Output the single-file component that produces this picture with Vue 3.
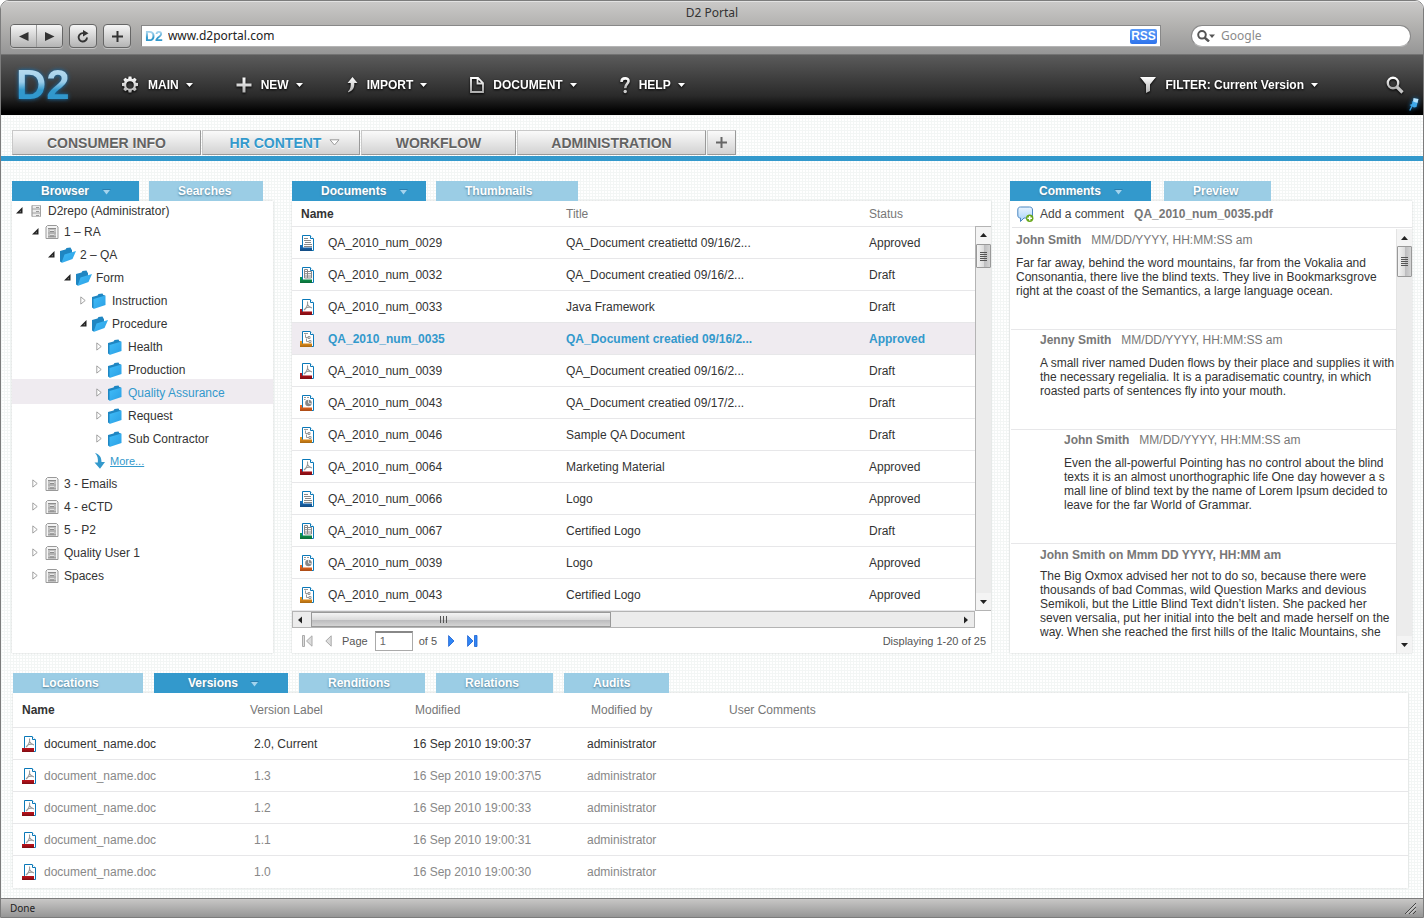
<script setup>
import { ref } from 'vue'

const url = ref('www.d2portal.com')
const query = ref('')
const page = ref('1')

const menus = [
  { icon: 'gear', label: 'MAIN', size: [18, 18] },
  { icon: 'plus', label: 'NEW', size: [16, 16] },
  { icon: 'import', label: 'IMPORT', size: [12, 18] },
  { icon: 'page', label: 'DOCUMENT', size: [14, 16] },
  { icon: 'help', label: 'HELP', size: [10, 17] },
]

const sections = [
  { label: 'CONSUMER INFO', width: 189 },
  { label: 'HR CONTENT', width: 158, active: true },
  { label: 'WORKFLOW', width: 155 },
  { label: 'ADMINISTRATION', width: 189 },
]

const browserTabs = [
  { label: 'Browser', width: 127, active: true },
  { label: 'Searches', width: 114 },
]
const documentTabs = [
  { label: 'Documents', width: 134, active: true },
  { label: 'Thumbnails', width: 142 },
]
const commentTabs = [
  { label: 'Comments', width: 141, active: true },
  { label: 'Preview', width: 107 },
]
const detailTabs = [
  { label: 'Locations', width: 130 },
  { label: 'Versions', width: 134, active: true },
  { label: 'Renditions', width: 126 },
  { label: 'Relations', width: 117 },
  { label: 'Audits', width: 105 },
]

const tree = [
  { depth: 0, open: true, icon: 'server', label: 'D2repo (Administrator)' },
  { depth: 1, open: true, icon: 'cabinet', label: '1 – RA' },
  { depth: 2, open: true, icon: 'folder-open', label: '2 – QA' },
  { depth: 3, open: true, icon: 'folder-open', label: 'Form' },
  { depth: 4, icon: 'folder', label: 'Instruction' },
  { depth: 4, open: true, icon: 'folder-open', label: 'Procedure' },
  { depth: 5, icon: 'folder', label: 'Health' },
  { depth: 5, icon: 'folder', label: 'Production' },
  { depth: 5, icon: 'folder', label: 'Quality Assurance', selected: true },
  { depth: 5, icon: 'folder', label: 'Request' },
  { depth: 5, icon: 'folder', label: 'Sub Contractor' },
  { depth: 4, more: true, icon: 'more', label: 'More...' },
  { depth: 1, icon: 'cabinet', label: '3 - Emails' },
  { depth: 1, icon: 'cabinet', label: '4 - eCTD' },
  { depth: 1, icon: 'cabinet', label: '5 - P2' },
  { depth: 1, icon: 'cabinet', label: 'Quality User 1' },
  { depth: 1, icon: 'cabinet', label: 'Spaces' },
]

const documents = [
  { type: 'word', name: 'QA_2010_num_0029', title: 'QA_Document creatiettd 09/16/2...', status: 'Approved' },
  { type: 'excel', name: 'QA_2010_num_0032', title: 'QA_Document creatied 09/16/2...', status: 'Draft' },
  { type: 'pdf', name: 'QA_2010_num_0033', title: 'Java Framework', status: 'Draft' },
  { type: 'flow', name: 'QA_2010_num_0035', title: 'QA_Document creatied 09/16/2...', status: 'Approved', selected: true },
  { type: 'pdf', name: 'QA_2010_num_0039', title: 'QA_Document creatied 09/16/2...', status: 'Draft' },
  { type: 'slides', name: 'QA_2010_num_0043', title: 'QA_Document creatied 09/17/2...', status: 'Draft' },
  { type: 'flow', name: 'QA_2010_num_0046', title: 'Sample QA Document', status: 'Draft' },
  { type: 'pdf', name: 'QA_2010_num_0064', title: 'Marketing Material', status: 'Approved' },
  { type: 'word', name: 'QA_2010_num_0066', title: 'Logo', status: 'Approved' },
  { type: 'excel', name: 'QA_2010_num_0067', title: 'Certified Logo', status: 'Draft' },
  { type: 'slides', name: 'QA_2010_num_0039', title: 'Logo', status: 'Approved' },
  { type: 'flow', name: 'QA_2010_num_0043', title: 'Certified Logo', status: 'Approved' },
]

const comments = [
  {
    level: 0, author: 'John Smith', date: 'MM/DD/YYYY, HH:MM:SS am',
    text: 'Far far away, behind the word mountains, far from the Vokalia and\nConsonantia, there live the blind texts. They live in Bookmarksgrove\nright at the coast of the Semantics, a large language ocean.',
  },
  {
    level: 1, author: 'Jenny Smith', date: 'MM/DD/YYYY, HH:MM:SS am',
    text: 'A small river named Duden flows by their place and supplies it with\nthe necessary regelialia. It is a paradisematic country, in which\nroasted parts of sentences fly into your mouth.',
  },
  {
    level: 2, author: 'John Smith', date: 'MM/DD/YYYY, HH:MM:SS am',
    text: 'Even the all-powerful Pointing has no control about the blind\ntexts it is an almost unorthographic life One day however a s\nmall line of blind text by the name of Lorem Ipsum decided to\nleave for the far World of Grammar.',
  },
  {
    level: 1, last: true, author: 'John Smith on Mmm DD YYYY, HH:MM am', date: '',
    text: 'The Big Oxmox advised her not to do so, because there were\nthousands of bad Commas, wild Question Marks and devious\nSemikoli, but the Little Blind Text didn’t listen. She packed her\nseven versalia, put her initial into the belt and made herself on the\nway. When she reached the first hills of the Italic Mountains, she',
  },
]

const versions = [
  { version: '2.0, Current', modified: '16 Sep 2010 19:00:37', current: true },
  { version: '1.3', modified: '16 Sep 2010 19:00:37\\5' },
  { version: '1.2', modified: '16 Sep 2010 19:00:33' },
  { version: '1.1', modified: '16 Sep 2010 19:00:31' },
  { version: '1.0', modified: '16 Sep 2010 19:00:30' },
]

const trayColors = { word: '#1b6bb8', excel: '#0f9a50', pdf: '#b5121b', flow: '#f0951c', slides: '#f06a20' }
</script>

<template>
  <div class="window">
    <svg class="defs" width="0" height="0" aria-hidden="true">
      <defs>
        <linearGradient id="silver" x1="0" y1="0" x2="0" y2="1">
          <stop offset="0" stop-color="#ffffff" /><stop offset="1" stop-color="#b0b0b0" />
        </linearGradient>
        <linearGradient id="folderFront" x1="0" y1="0" x2="1" y2="1">
          <stop offset="0" stop-color="#3fbcf8" /><stop offset="1" stop-color="#2b9fe4" />
        </linearGradient>
        <linearGradient id="trayShade" x1="0" y1="0" x2="0" y2="1">
          <stop offset="0.2" stop-color="#000" stop-opacity="0" /><stop offset="1" stop-color="#000" stop-opacity="0.3" />
        </linearGradient>
        <linearGradient id="bubble" x1="0" y1="0" x2="0" y2="1">
          <stop offset="0" stop-color="#e8f4ff" /><stop offset="1" stop-color="#a8d2fa" />
        </linearGradient>
      </defs>
      <symbol id="gear" viewBox="0 0 18 18">
        <path fill="url(#silver)" fill-rule="evenodd" d="M7.6 0.5h2.8l.4 2.2 1 .4 1.9-1.3 2 2-1.3 1.9.4 1 2.2.4v2.8l-2.2.4-.4 1 1.3 1.9-2 2-1.9-1.3-1 .4-.4 2.2H7.600l-.4-2.200-1-.4-1.900 1.300-2-2 1.300-1.900-.4-1-2.200-.4V7.100l2.200-.4.4-1-1.300-1.900 2-2 1.900 1.300 1-.4zM9 5.200a3.800 3.800 0 1 0 0 7.600 3.800 3.800 0 0 0 0-7.600z" />
      </symbol>
      <symbol id="plus" viewBox="0 0 16 16"><path fill="url(#silver)" d="M6.500 0.500h3v6h6v3h-6v6h-3v-6h-6v-3h6z" /></symbol>
      <symbol id="import" viewBox="0 0 12 18">
        <path fill="url(#silver)" d="M6.500 1l5 6H8.300c.3 4.500-1.300 7.500-5.800 9.300-.7-.2-.7-.7-.2-1.100C4.500 13 5 10.500 4.700 7H1.500z" />
      </symbol>
      <symbol id="page" viewBox="0 0 14 16">
        <path fill="none" stroke="url(#silver)" stroke-width="1.800" d="M1 1h7l5 5v9H1zM7.500 1v5.500H13" />
      </symbol>
      <symbol id="help" viewBox="0 0 10 17">
        <path fill="none" stroke="url(#silver)" stroke-width="2.600" d="M1.500 5c0-5 7.500-4.500 7-.7C8.200 7 5.200 7 5.200 11.200" />
        <circle cx="5.200" cy="14.500" r="1.700" fill="#ccc" />
      </symbol>
      <symbol id="funnel" viewBox="0 0 18 18"><path fill="url(#silver)" d="M1 1h16l-6 7.500V15l-4 2V8.500z" /></symbol>
      <symbol id="lens" viewBox="0 0 18 18">
        <circle cx="7" cy="7" r="5.200" fill="none" stroke="url(#silver)" stroke-width="2.400" />
        <path stroke="#c4c4c4" stroke-width="3.200" d="M11 11l5.500 5.500" />
      </symbol>
      <symbol id="lens-dark" viewBox="0 0 18 12">
        <circle cx="5" cy="4.800" r="3.800" fill="none" stroke="#555" stroke-width="2" />
        <path stroke="#555" stroke-width="2.400" d="M7.500 7.500L12 11.500" /><path fill="#555" d="M12 4.500h6l-3 3.500z" />
      </symbol>
      <symbol id="pin" viewBox="0 0 10 13">
        <path fill="#3fa9ea" d="M3.500 3L8.500 4.500 7.500 9 5 9.500.5 7 3 6z" /><path fill="#b5e4ff" d="M4.500 0L9.500 1 8.500 5 4 3.500z" />
        <path stroke="#3fa9ea" stroke-width="1.300" d="M3 8L.8 12.500" />
      </symbol>
      <symbol id="caret" viewBox="0 0 7 4"><path fill="#fff" d="M0 0h7L3.500 4z" /></symbol>
      <symbol id="tab-caret" viewBox="0 0 9 6"><path fill="#2a7fb0" d="M0 0h9L4.500 5z" /><path fill="#a4d4ee" d="M1 1h7L4.500 5.500z" /></symbol>
      <symbol id="section-caret" viewBox="0 0 11 7"><path fill="#fff" stroke="#999" d="M1 .8h9L5.500 6z" /></symbol>
      <symbol id="arrow-open" viewBox="0 0 7 7"><path fill="#222" d="M6.500 0v6.500H0z" /><path fill="#777" d="M5 3.500v1.800H3.200z" /></symbol>
      <symbol id="arrow-closed" viewBox="0 0 6 9"><path fill="#fff" stroke="#999" stroke-width="0.900" d="M.8 .9v7.200l4.400-3.600z" /></symbol>
      <symbol id="server" viewBox="0 0 16 16">
        <path fill="#ececec" stroke="#b0b0b0" stroke-width="0.800" d="M4 2.500h8.500v3.500H4zM4 6h8.500v4H4zM4 10h8.500v3.500H4z" />
        <path stroke="#999" d="M8 4.500h3M8 8.500h3M8 12.500h3" /><path stroke="#999" stroke-width="0.800" d="M4 2.500v11M12.500 2.500v11" />
      </symbol>
      <symbol id="cabinet" viewBox="0 0 16 16">
        <path fill="#f4f4f4" stroke="#999" d="M3.500 1.500h9l1.500 1.500v11.500H2V3z" /><path fill="#c0c0c0" d="M4 4.500h8v4H4zM4 9.500h8v3.500H4z" />
        <path stroke="#777" stroke-width="0.800" d="M4 4.500h8M4 9h8M4 13h8" /><path stroke="#fff" d="M6 6.500h4M6 11h4" /><path stroke="#666" stroke-width="0.700" d="M6 7.300h4M6 11.800h4" />
      </symbol>
      <symbol id="folder" viewBox="0 0 16 16">
        <path fill="#1f86c2" d="M0 4L5.500 2.500 6.500 1l4-.5.800 1.500 1.700.5V6L1.500 15.500 0 14.500z" />
        <path fill="url(#folderFront)" d="M1.500 6L13.500 2.500v9.500L1.500 16z" />
      </symbol>
      <symbol id="folder-open" viewBox="0 0 16 16">
        <path fill="#1f86c2" d="M0 4L5.500 2.500 6.500 1l4-.5 1 2 .5.500V8L1.500 15.500 0 14.500z" />
        <path fill="url(#folderFront)" d="M4.500 7.500L16 4l-3.500 8L1.500 16z" />
      </symbol>
      <symbol id="more" viewBox="0 0 16 16"><path fill="#3399cc" d="M3 0c4.500 1.500 6.500 4 6.500 9H13L8 15.800 2.500 9.500h3.300C6.300 5.500 5.500 2.500 3 0z" /></symbol>
      <symbol id="doc-word" viewBox="0 0 14 16">
        <path stroke="#888" d="M4 3.500h4M4 5.500h7M5 7.500h6M4 9.500h8M4 11.500h8" />
      </symbol>
      <symbol id="doc-excel" viewBox="0 0 14 16">
        <path fill="#fff" stroke="#888" d="M4.500 2.500h3v2h4v6.500h-7zM4.500 4.500h7M4.500 6.700h7M4.500 9h7M7.500 3v8" />
      </symbol>
      <symbol id="doc-pdf" viewBox="0 0 14 16">
        <path fill="none" stroke="#999" stroke-width="1.100" d="M7.500 2.500c.5 3-1 6.500-3.500 8.500M7.500 5.500c1 2.200 2 3 4.500 3.500M5.500 9c2-1 4-1 6-.5" />
      </symbol>
      <symbol id="doc-flow" viewBox="0 0 14 16">
        <path fill="none" stroke="#999" d="M4 2.500h4M5.500 3.500v3h3M8 5.500h2v2H8zM6.500 7.500v3H9M9 9.500h2v2H9z" />
      </symbol>
      <symbol id="doc-slides" viewBox="0 0 14 16">
        <circle cx="8.500" cy="8" r="3.300" fill="#888" /><path stroke="#999" d="M4 2.500h2M7 2.500h2M4 4.500h1.500" /><path stroke="#fff" stroke-width="0.700" d="M8.500 8V4.500M8.500 8l3 1" />
      </symbol>
    </svg>

    <header class="chrome">
      <div class="title">D2 Portal</div>
      <div class="toolbar">
        <div class="button-pair">
          <button class="chrome-button" aria-label="Back"><svg width="10" height="9"><path fill="#333" d="M0 4.500L9.500 0v9z" /></svg></button>
          <button class="chrome-button" aria-label="Forward"><svg width="10" height="9"><path fill="#333" d="M9.500 4.500L0 0v9z" /></svg></button>
        </div>
        <button class="chrome-button single" aria-label="Reload">
          <svg width="12" height="13" viewBox="0 0 12 13"><path fill="none" stroke="#333" stroke-width="1.900" d="M10 7.500A4.200 4.200 0 1 1 7 3.300" /><path fill="#333" d="M6 0l5.500 3.200L6 6.500z" /></svg>
        </button>
        <button class="chrome-button single" aria-label="New tab">
          <svg width="11" height="11"><path stroke="#333" stroke-width="2" d="M5.500 0v11M0 5.500h11" /></svg>
        </button>
        <div class="address">
          <span class="favicon">D2</span>
          <input v-model="url" type="text" aria-label="Address">
          <button class="rss">RSS</button>
        </div>
        <div class="search">
          <svg width="18" height="12"><use href="#lens-dark" /></svg>
          <input v-model="query" type="text" placeholder="Google" aria-label="Search the web">
        </div>
      </div>
    </header>

    <nav class="menu">
      <div class="logo">D2</div>
      <button v-for="m in menus" :key="m.label" class="menu-item">
        <svg :width="m.size[0]" :height="m.size[1]"><use :href="'#' + m.icon" /></svg>
        <span>{{ m.label }}</span>
        <svg class="caret" width="7" height="4"><use href="#caret" /></svg>
      </button>
      <button class="menu-item filter">
        <svg width="18" height="18"><use href="#funnel" /></svg>
        <span>FILTER: Current Version</span>
        <svg class="caret" width="7" height="4"><use href="#caret" /></svg>
      </button>
      <button class="menu-item lens" aria-label="Search"><svg width="18" height="18"><use href="#lens" /></svg></button>
      <button class="pin" aria-label="Pin menu"><svg width="10" height="13"><use href="#pin" /></svg></button>
    </nav>

    <div class="sections">
      <button v-for="s in sections" :key="s.label" class="section" :class="{ active: s.active }" :style="{ width: s.width + 'px' }">
        {{ s.label }}
        <svg v-if="s.active" width="11" height="7"><use href="#section-caret" /></svg>
      </button>
      <button class="section add" aria-label="Add section"><svg width="11" height="11"><path stroke="#666" stroke-width="2" d="M5.500 0v11M0 5.500h11" /></svg></button>
    </div>

    <main class="content">
      <div class="columns">
        <section class="column">
          <div class="tabs">
            <button v-for="t in browserTabs" :key="t.label" class="tab" :class="{ active: t.active }" :style="{ width: t.width + 'px' }">
              {{ t.label }}<svg v-if="t.active" width="9" height="6"><use href="#tab-caret" /></svg>
            </button>
          </div>
          <ul class="panel tree">
            <li v-for="n in tree" :key="n.label" :class="{ root: n.depth === 0, selected: n.selected, more: n.more }" :style="{ paddingLeft: n.depth * 16 + 4 + 'px' }">
              <span class="twisty">
                <svg v-if="n.open" width="7" height="7"><use href="#arrow-open" /></svg>
                <svg v-else-if="!n.more" width="6" height="9"><use href="#arrow-closed" /></svg>
              </span>
              <svg width="16" height="16"><use :href="'#' + n.icon" /></svg>
              <a v-if="n.more" href="#">{{ n.label }}</a>
              <span v-else>{{ n.label }}</span>
            </li>
          </ul>
        </section>

        <section class="column">
          <div class="tabs">
            <button v-for="t in documentTabs" :key="t.label" class="tab" :class="{ active: t.active }" :style="{ width: t.width + 'px' }">
              {{ t.label }}<svg v-if="t.active" width="9" height="6"><use href="#tab-caret" /></svg>
            </button>
          </div>
          <div class="panel documents">
            <div class="list">
              <table class="doc-table">
                <thead><tr><th class="name">Name</th><th class="doc-title">Title</th><th>Status</th></tr></thead>
                <tbody>
                  <tr v-for="(d, i) in documents" :key="i" :class="{ selected: d.selected }">
                    <td>
                      <div class="file">
                        <svg width="14" height="16" viewBox="0 0 14 16">
                          <path fill="#fff" stroke="#0a78b8" d="M2.500 .5H10L13.500 4v11.500h-11z" /><path fill="#fff" stroke="#0a78b8" d="M10.500 .5v3h3" />
                          <use :href="'#doc-' + d.type" />
                          <path :fill="trayColors[d.type]" d="M0 10h2v2.500h10V16H0z" /><path fill="url(#trayShade)" d="M0 10h2v2.500h10V16H0z" />
                        </svg>
                        <span>{{ d.name }}</span>
                      </div>
                    </td>
                    <td>{{ d.title }}</td>
                    <td>{{ d.status }}</td>
                  </tr>
                </tbody>
              </table>
              <div class="rail">
                <div class="vscroll">
                  <svg class="vbutton" width="15" height="17"><path fill="#222" d="M4 10h7L7.500 6z" /></svg>
                  <div class="vthumb short"><svg width="7" height="9"><path stroke="#555" d="M0 .5h7M0 2.500h7M0 4.500h7M0 6.500h7M0 8.500h7" /></svg></div>
                  <svg class="vend" width="15" height="17"><path fill="#222" d="M4 7h7l-3.500 4z" /></svg>
                </div>
              </div>
            </div>
            <div class="hscroll">
              <svg width="18" height="14"><path fill="#222" d="M9 3.500v7L5 7z" /></svg>
              <div class="hthumb"><svg width="9" height="7"><path stroke="#555" d="M1.500 0v7M4.500 0v7M7.500 0v7" /></svg></div>
              <svg class="hend" width="18" height="14"><path fill="#222" d="M8 3.500v7l4-3.500z" /></svg>
            </div>
            <div class="pager">
              <button aria-label="First page" disabled><svg width="11" height="12"><path fill="#ddd" stroke="#aaa" d="M.5 .5h2v11h-2zM10 .8v10.400L4.500 6z" /></svg></button>
              <button aria-label="Previous page" disabled><svg width="7" height="12"><path fill="#ddd" stroke="#aaa" d="M6.200 .8v10.400L.8 6z" /></svg></button>
              <label for="page-number">Page</label>
              <input id="page-number" v-model="page" type="text">
              <span>of 5</span>
              <button aria-label="Next page"><svg width="7" height="12"><path fill="#2f86f6" stroke="#1a5fd0" stroke-width="0.800" d="M.6 .6v10.800L6 6z" /></svg></button>
              <button aria-label="Last page"><svg width="11" height="12"><path fill="#2f86f6" stroke="#1a5fd0" stroke-width="0.800" d="M.6 .6v10.800L6 6zM7.500 .5h2.500v11H7.500z" /></svg></button>
              <span class="range">Displaying 1-20 of 25</span>
            </div>
          </div>
        </section>

        <section class="column">
          <div class="tabs wide">
            <button v-for="t in commentTabs" :key="t.label" class="tab" :class="{ active: t.active }" :style="{ width: t.width + 'px' }">
              {{ t.label }}<svg v-if="t.active" width="9" height="6"><use href="#tab-caret" /></svg>
            </button>
          </div>
          <div class="panel discussion">
            <div class="add-comment">
              <button>
                <svg width="17" height="17" viewBox="0 0 17 17">
                  <path fill="url(#bubble)" stroke="#4a86c0" d="M3.500 1h9C14.500 1 15.500 2 15.500 4v5c0 2-1 3-3 3H7L3.500 15.500V12C1.500 12 .8 11 .8 9V4c0-2 .9-3 2.700-3z" />
                  <circle cx="12.700" cy="12.300" r="3.700" fill="#69a81c" /><path stroke="#fff" stroke-width="1.500" d="M12.700 10v4.600M10.400 12.300H15" />
                </svg>
                Add a comment
              </button>
              <strong>QA_2010_num_0035.pdf</strong>
            </div>
            <div class="thread">
              <div class="messages">
                <article v-for="(c, i) in comments" :key="i" class="comment" :class="['level-' + c.level, { last: c.last }]">
                  <h3>{{ c.author }}<time v-if="c.date">{{ c.date }}</time></h3>
                  <p>{{ c.text }}</p>
                </article>
              </div>
              <div class="vscroll light">
                <svg class="vbutton" width="15" height="17"><path fill="#222" d="M4 11h7L7.500 7z" /></svg>
                <div class="vthumb"><svg width="7" height="9"><path stroke="#555" d="M0 .5h7M0 2.500h7M0 4.500h7M0 6.500h7M0 8.500h7" /></svg></div>
                <svg class="vend" width="15" height="17"><path fill="#222" d="M4 7h7l-3.500 4z" /></svg>
              </div>
            </div>
          </div>
        </section>
      </div>

      <section class="details">
        <div class="tabs detail">
          <button v-for="t in detailTabs" :key="t.label" class="tab" :class="{ active: t.active }" :style="{ width: t.width + 'px' }">
            {{ t.label }}<svg v-if="t.active" width="9" height="6"><use href="#tab-caret" /></svg>
          </button>
        </div>
        <div class="panel">
          <table class="version-table">
            <thead>
              <tr>
                <th class="name">Name</th><th class="version">Version Label</th><th class="modified">Modified</th><th class="by">Modified by</th><th>User Comments</th>
              </tr>
            </thead>
            <tbody>
              <tr v-for="v in versions" :key="v.version" :class="{ current: v.current }">
                <td>
                  <div class="file">
                    <svg width="14" height="16" viewBox="0 0 14 16">
                      <path fill="#fff" stroke="#0a78b8" d="M2.500 .5H10L13.500 4v11.500h-11z" /><path fill="#fff" stroke="#0a78b8" d="M10.500 .5v3h3" />
                      <use href="#doc-pdf" />
                      <path fill="#b5121b" d="M0 12h12v4H0z" /><path fill="url(#trayShade)" d="M0 12h12v4H0z" />
                    </svg>
                    <span>document_name.doc</span>
                  </div>
                </td>
                <td>{{ v.version }}</td><td>{{ v.modified }}</td><td>administrator</td><td></td>
              </tr>
            </tbody>
          </table>
        </div>
      </section>
    </main>

    <footer class="status">
      <span>Done</span>
      <svg width="11" height="11"><path stroke="#444" d="M0 11L11 0M4 11l7-7M8 11l3-3" /><path stroke="#ddd" d="M1.500 11L11 1.500M5.500 11L11 5.500" /></svg>
    </footer>
  </div>
</template>

<style>
body { background: #fff; }
</style>

<style scoped>
.window {
  box-sizing: border-box; min-height: 100vh; display: flex; flex-direction: column;
  border: 1px solid #7c7c7c; border-radius: 9px 9px 0 0; overflow: hidden;
  font-family: "Liberation Sans", Arial, sans-serif; font-size: 12px; line-height: 14px; color: #333;
  background-color: #fff;
  background-image: linear-gradient(#f3f6f5 1px, transparent 1px), linear-gradient(90deg, #f3f6f5 1px, transparent 1px);
  background-size: 3px 3px;
}
.defs { position: absolute; }
button { border: 0; padding: 0; margin: 0; background: none; font: inherit; color: inherit; cursor: pointer; }
svg { display: block; flex: none; }

.chrome {
  background: linear-gradient(#cbcac9, #b3b2b0 24px, #969696); border-bottom: 1px solid #737373;
  box-shadow: inset 0 1px 0 #e2e2e2; font-family: "Noto Sans", sans-serif; padding-bottom: 6px;
}
.title { text-align: center; font-size: 12px; line-height: 23px; color: #333; }
.toolbar { display: flex; align-items: center; padding: 0 12px 0 9px; }
.button-pair { display: flex; box-sizing: border-box; width: 53px; height: 24px; border: 1px solid #666; border-radius: 4px; overflow: hidden; box-shadow: 0 1px 0 #c4c4c4; }
.chrome-button { display: flex; align-items: center; justify-content: center; flex: 1; background: linear-gradient(#f6f6f6, #b4b4b4); }
.button-pair .chrome-button + .chrome-button { border-left: 1px solid #999; }
.chrome-button.single { flex: none; box-sizing: border-box; width: 28px; height: 24px; border: 1px solid #666; border-radius: 4px; margin-left: 6px; box-shadow: 0 1px 0 #c4c4c4; }
.address { flex: 1; display: flex; align-items: center; box-sizing: border-box; height: 22px; margin-left: 10px; padding: 0 3px; background: #fff; border: 1px solid #888; border-bottom-color: #b4b4b4; }
.favicon { font: bold 14px "Liberation Sans", sans-serif; color: transparent; background: linear-gradient(#9fd0ec 30%, #3399cc 60%); background-clip: text; margin-right: 5px; }
input { border: 0; padding: 0; background: transparent; font: inherit; color: #222; min-width: 0; outline: 0; }
.address input { flex: 1; font-size: 12px; }
.rss { background: linear-gradient(#5a9af8, #2f74ec); color: #fff; border-radius: 2px; height: 15px; width: 27px; font: bold 12px/15px "Liberation Sans", sans-serif; }
.search { display: flex; align-items: center; gap: 6px; box-sizing: border-box; width: 220px; height: 22px; margin-left: 30px; padding: 0 5px; background: #fff; border: 1px solid #888; border-bottom-color: #b4b4b4; border-radius: 11px; }
.search input { flex: 1; font-size: 12px; }
.search input::placeholder { color: #8a8a8a; opacity: 1; }

.menu { position: relative; display: flex; align-items: center; height: 60px; padding: 0 19px 0 15px; background: linear-gradient(#5b5b5b, #2a2a2a 68%, #000 95%); color: #fff; font-weight: bold; }
.logo { width: 105px; font-size: 42px; line-height: 56px; font-weight: bold; color: transparent; background: linear-gradient(#b4d9ee 14px, #9ccde9 25px, #3399cc 33px, #2b93d0); background-clip: text; filter: drop-shadow(0 0 2px #1173b8); }
.menu-item { display: flex; align-items: center; margin-right: 43px; filter: drop-shadow(0 1px 1px #000); }
.menu-item span { margin-left: 9px; }
.caret { margin-left: 7px; }
.filter { margin-left: auto; margin-right: 68px; }
.menu-item.lens { margin-right: 0; }
.pin { position: absolute; right: 4px; bottom: 4px; filter: drop-shadow(0 0 2px #1173b8); }

.sections { display: flex; align-items: flex-end; gap: 1px; padding: 15px 11px 0; border-bottom: 5px solid #3399cc; }
.section { display: flex; align-items: center; justify-content: center; gap: 8px; box-sizing: border-box; height: 25px; margin-bottom: 1px; border: 1px solid #c8c8c8; border-right-color: #999; border-bottom-color: #999; background: linear-gradient(#fafafa, #d2d2d2); font-size: 14px; font-weight: bold; color: #636363; text-shadow: 0 1px 0 #fff; }
.section.active { padding-left: 8px; color: #3399cc; }
.section.add { width: 29px; }

.content { flex: 1; padding: 20px 11px 10px; }
.columns { display: grid; grid-template-columns: 261fr 699fr 402fr; gap: 19px; }
.column { display: flex; flex-direction: column; min-width: 0; }
.tabs { display: flex; gap: 10px; }
.tabs.wide { gap: 13px; }
.tab { display: flex; align-items: center; gap: 13px; box-sizing: border-box; height: 20px; padding-left: 29px; background: #9bcde5; color: #fff; font-weight: bold; text-shadow: 0 1px 2px #4a7a94; }
.tab.active { background: #3399cc; }
.tab svg { margin-top: 2px; }
.panel { flex: 1; margin: 0; background: #fff; box-shadow: 0 0 2px #c9cdcd; }
.column > .tabs, .details > .tabs { z-index: 1; position: relative; }

.tree { list-style: none; padding: 0; }
.tree li { display: flex; align-items: center; height: 23px; }
.tree li.root { height: 19px; }
.tree li.selected { background: #efebf0; color: #3399cc; box-shadow: 0 -2px 0 #efebf0; }
.tree li > span:last-child { margin-left: 4px; }
.tree li.more { height: 22px; }
.tree li.more a { margin-left: 2px; font-size: 11px; color: #3399cc; }
.twisty { width: 12px; flex: none; }

.documents { display: flex; flex-direction: column; }
.list { display: grid; grid-template-columns: 1fr 16px; }
table { border-collapse: separate; border-spacing: 0; table-layout: fixed; width: 100%; }
th, td { box-sizing: border-box; height: 32px; padding: 0; border-bottom: 1px solid #e7e7e9; text-align: left; white-space: nowrap; }
th { color: #777; font-weight: normal; }
th.name { color: #333; font-weight: bold; }
.doc-table th { height: 26px; }
.doc-table .name { width: 264px; padding-left: 9px; }
.doc-table .doc-title { width: 304px; }
.doc-table td:first-child { padding-left: 8px; }
.doc-table th:nth-child(2), .doc-table td:nth-child(2) { padding-left: 10px; }
.doc-table th:nth-child(3), .doc-table td:nth-child(3) { padding-left: 9px; }
.doc-table .selected td { background: #efebf0; color: #3399cc; font-weight: bold; }
.file { display: flex; align-items: center; gap: 14px; }
.rail { display: flex; flex-direction: column; padding-top: 25px; }
.vscroll { flex: 1; display: flex; flex-direction: column; box-sizing: border-box; width: 16px; border: 1px solid #b4b4b4; border-right: 0; background: #ececec; }
.vscroll.light { border-color: #e4e4e4; border-top: 0; border-bottom: 0; margin-top: 1px; }
.vbutton { background: #f4f4f4; }
.vthumb { display: flex; align-items: center; justify-content: center; box-sizing: border-box; height: 31px; border: 1px solid #999; border-radius: 1px; background: linear-gradient(90deg, #f4f4f4, #dcdcdc 50%, #bcbcbe 55%, #d4d4d4); }
.vthumb.short { height: 24px; }
.vend { margin-top: auto; background: #f4f4f4; }
.hscroll { display: flex; align-items: center; box-sizing: border-box; height: 17px; margin-right: 16px; border: 1px solid #b4b4b4; background: #ececec; }
.hthumb { display: flex; align-items: center; justify-content: center; box-sizing: border-box; width: 44%; height: 15px; padding-right: 34px; border: 1px solid #999; background: linear-gradient(#f4f4f4, #dcdcdc 50%, #bcbcbe 55%, #d4d4d4); }
.hend { margin-left: auto; }
.pager { display: flex; align-items: center; height: 25px; padding: 0 5px 0 10px; font-size: 11px; color: #555; }
.pager button + button { margin-left: 12px; }
.pager label { margin-left: 10px; }
.pager input { box-sizing: border-box; width: 38px; height: 20px; margin: 0 6px 0 7px; padding-left: 4px; border: 1px solid #aaa; border-top: 2px solid #888; color: #666; }
.pager span + button { margin-left: 11px; }
.range { margin-left: auto; }

.discussion { display: flex; flex-direction: column; }
.add-comment { display: flex; align-items: center; gap: 10px; height: 26px; margin-left: 2px; padding-left: 5px; border-bottom: 1px solid #e4e4e6; color: #777; }
.add-comment button { display: flex; align-items: center; gap: 6px; color: #444; }
.thread { flex: 1; display: grid; grid-template-columns: 1fr 16px; }
.messages { margin-left: 1px; }
.comment { box-sizing: border-box; height: 100px; padding-top: 3px; border-bottom: 1px solid #e7e7e9; white-space: nowrap; }
.comment h3 { margin: 0; font-size: 12px; line-height: 14px; color: #777; }
.comment time { margin-left: 10px; font-weight: normal; }
.comment p { margin: 9px 0 0; white-space: pre; }
.level-0 { padding-left: 5px; padding-top: 5px; height: 102px; }
.level-1 { padding-left: 29px; }
.level-2 { padding-left: 53px; height: 114px; }
.comment.last { border: 0; height: 108px; padding-top: 4px; }
.comment.last p { margin-top: 7px; }

.details { margin: 20px 4px 0 1px; }
.tabs.detail { gap: 11px; }
.tabs.detail .active { padding-left: 34px; gap: 12px; }
.version-table th { height: 35px; }
.version-table th.name { width: 237px; padding-left: 9px; }
.version-table .version { width: 163px; }
.version-table .modified { width: 174px; }
.version-table .by { width: 142px; }
.version-table .modified { padding-left: 2px; }
.version-table .by { padding-left: 4px; }
.version-table td { color: #888; }
.version-table td:first-child { padding-left: 9px; }
.version-table td:nth-child(2) { padding-left: 4px; }
.version-table .file { gap: 8px; }
.version-table .current td { color: #333; }
.version-table tr:last-child td { border-bottom: 0; }

.version-table thead tr th { border-bottom: 1px solid #e7e7e9; }
.status { display: flex; align-items: center; justify-content: space-between; height: 18px; padding: 0 7px 0 9px; border-top: 1px solid #7c7c7c; background: linear-gradient(#c8c7c6, #969696); font: 10px "Noto Sans", sans-serif; color: #222; }
</style>
